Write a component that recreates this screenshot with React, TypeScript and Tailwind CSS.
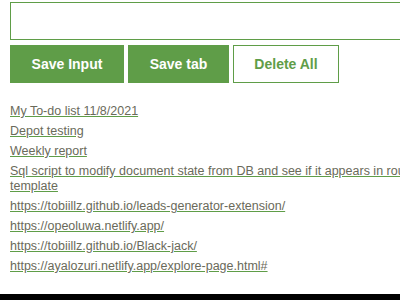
const links = [
  'My To-do list 11/8/2021',
  'Depot testing',
  'Weekly report',
  'Sql script to modify document state from DB and see if it appears in route template',
  'https://tobiillz.github.io/leads-generator-extension/',
  'https://opeoluwa.netlify.app/',
  'https://tobiillz.github.io/Black-jack/',
  'https://ayalozuri.netlify.app/explore-page.html#',
];

export default function App() {
  return (
    <div className="w-[400px] h-[300px] overflow-hidden flex flex-col bg-white font-['Liberation_Sans',Arial,sans-serif]">
      <div className="flex-1 w-[470px] pl-[10px] pt-[2px]">
        <input
          type="text"
          className="block w-[450px] h-[38px] border border-[#5f9d48] bg-white outline-none px-2"
        />
        <div className="flex gap-[4px] mt-[5px]">
          <button className="h-[38px] w-[114px] bg-[#5f9d48] border border-[#5f9d48] text-white font-bold text-[14px]">
            Save Input
          </button>
          <button className="h-[38px] w-[101px] bg-[#5f9d48] border border-[#5f9d48] text-white font-bold text-[14px]">
            Save tab
          </button>
          <button className="h-[38px] w-[106px] bg-white border border-[#5f9d48] text-[#5f9d48] font-bold text-[14px]">
            Delete All
          </button>
        </div>
        <ul className="mt-[21px] flex flex-col gap-[5px] w-[425px] text-[12.5px] leading-[15px]">
          {links.map((l) => (
            <li key={l}>
              <a href="#" className="text-[#6a6a5a] underline decoration-[#5f9d48]">
                {l}
              </a>
            </li>
          ))}
        </ul>
      </div>
      <div className="h-[6px] bg-black" />
    </div>
  );
}
